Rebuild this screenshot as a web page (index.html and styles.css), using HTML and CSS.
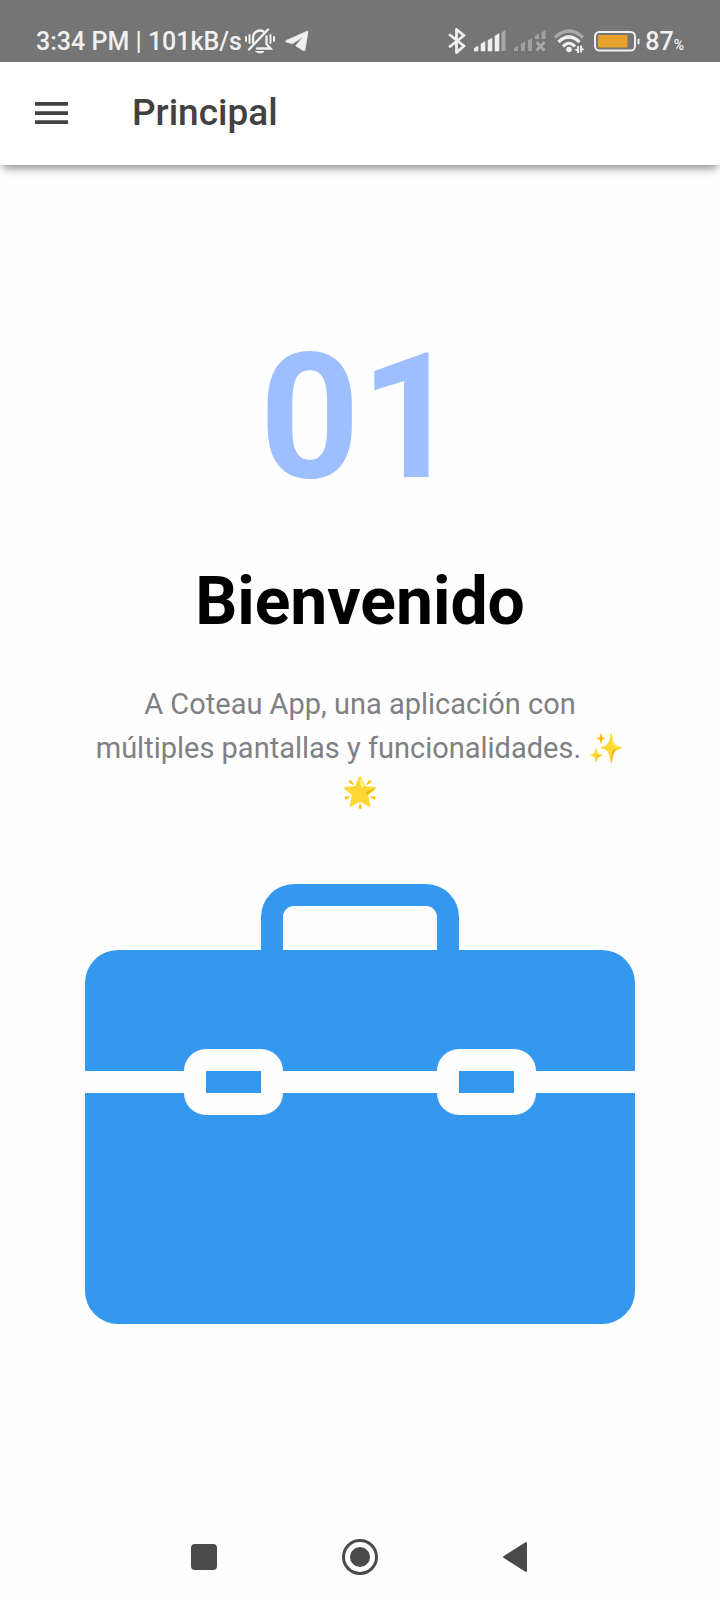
FILE: index.html
```html
<!DOCTYPE html>
<html lang="es">
<head>
<meta charset="utf-8">
<meta name="viewport" content="width=device-width, initial-scale=1">
<title>Principal</title>
<link rel="stylesheet" href="styles.css">
</head>
<body>
<div class="status">
  <div class="status-group">
    <span>3:34 PM | 101kB/s</span>
    <svg class="icon-bell" viewBox="0 0 30 26" fill="none" stroke="#f0f0f0" stroke-width="2" stroke-linecap="round" aria-hidden="true">
      <path d="M1 9v4M4.500 7v8M25.500 7v8M29 9v4"/>
      <path d="M8 15V9.500a7 7 0 0 1 10.500-6M21.500 8.500V16l4 4.500H12" stroke-width="2.400"/>
      <path d="M4 21.500L23 1.500" stroke-width="2.400"/>
      <path d="M11 23.500h8q-4 3-8 0z" fill="#f0f0f0" stroke-width="1"/>
    </svg>
    <svg class="icon-plane" viewBox="0 0 24 22" aria-hidden="true">
      <path d="M1 10.500L22 1.200q1.200-.4 1 1L20 20q-.5 1.500-1.800.6L10.500 15.800l8-9.300L7.500 13.700 1 12q-.8-.7 0-1.500z" fill="#f0f0f0" stroke="#f0f0f0" stroke-width=".6"/>
    </svg>
  </div>
  <div class="status-group">
    <svg class="icon-bluetooth" viewBox="0 0 18 26" fill="none" stroke="#f0f0f0" stroke-width="2.800" stroke-linejoin="round" stroke-linecap="round" aria-hidden="true">
      <path d="M2 7l14 11-7.500 6.500V1.500L16 7.500 2 18.500"/>
    </svg>
    <svg class="icon-signal" viewBox="0 0 32 22" fill="#f0f0f0" stroke="#f0f0f0" stroke-width=".6" aria-hidden="true">
      <path d="M0 21v-2.500l4-2.500v5zM7 21v-7l4-2.500V21zM14 21V10.500L18 8v13zM21 21V6l4-2.500V21z"/>
      <path d="M27.500 21V2.500L31.500 0v21z" fill="#a9a9a9" stroke="none"/>
    </svg>
    <svg class="icon-signal" viewBox="0 0 32 22" fill="#a0a0a0" aria-hidden="true">
      <path d="M0 21v-2.500l4-2.500v5zM7 21v-7l4-2.500V21zM14 21V10.500L18 8v13zM21 9V6l4-2.500V9zM27.500 9V2.500L31.500 0v9z"/>
      <path d="M22.500 12l8 8.500M30.500 12l-8 8.500" stroke="#a9a9a9" stroke-width="2.800"/>
    </svg>
    <svg class="icon-wifi" viewBox="0 0 30 25" fill="none" stroke="#f0f0f0" stroke-width="3.200" aria-hidden="true">
      <path d="M1 8.500Q15-4.500 29 8.500" stroke="#a9a9a9"/>
      <path d="M4.500 13Q15 3 25.500 13"/>
      <path d="M9 17.500Q15 11 21 17.500"/>
      <circle cx="15" cy="20.500" r="2.800" fill="#f0f0f0" stroke="none"/>
      <path d="M24 24v-7M27 16.500v7" stroke-width="1.800"/>
      <path d="M20.500 20h4v4zM26.500 17l4 4h-4z" fill="#f0f0f0" stroke="none"/>
    </svg>
    <svg class="icon-battery" viewBox="0 0 46 21" aria-hidden="true">
      <rect x="1" y="1" width="40" height="18.500" rx="4.500" fill="none" stroke="#f0f0f0" stroke-width="2"/>
      <rect x="4" y="4" width="29.500" height="12.500" rx="1" fill="#e8a22c"/>
      <rect x="43.500" y="7.500" width="2" height="6" rx="1" fill="#f0f0f0"/>
    </svg>
    <span class="battery-level">87<small>%</small></span>
  </div>
</div>
<header class="appbar">
  <button class="menu" type="button" aria-label="Menú">
    <svg viewBox="0 0 33 22" fill="#424242" aria-hidden="true"><path d="M0 0h33v3.700H0zM0 9.200h33v3.700H0zM0 18.300h33V22H0z"/></svg>
  </button>
  <h1 class="title">Principal</h1>
</header>
<main class="content">
  <p class="number">01</p>
  <h2 class="welcome">Bienvenido</h2>
  <p class="intro">A Coteau App, una aplicación con múltiples pantallas y funcionalidades. ✨ 🌟</p>
  <svg class="briefcase" viewBox="0 0 50 40" aria-hidden="true">
    <path fill="#3498ee" d="M0 17V9a3 3 0 0 1 3-3h13V3a3 3 0 0 1 3-3h12a3 3 0 0 1 3 3v3h13a3 3 0 0 1 3 3v8h-9a2 2 0 0 0-2-2h-5a2 2 0 0 0-2 2H18a2 2 0 0 0-2-2h-5a2 2 0 0 0-2 2zM18 6h14V3a1 1 0 0 0-1-1H19a1 1 0 0 0-1 1zM11 17h5v2h-5zM34 17h5v2h-5zM0 19h9a2 2 0 0 0 2 2h5a2 2 0 0 0 2-2h14a2 2 0 0 0 2 2h5a2 2 0 0 0 2-2h9v18a3 3 0 0 1-3 3H3a3 3 0 0 1-3-3z" fill-rule="evenodd"/>
  </svg>
</main>
<nav class="navbar">
  <button type="button" aria-label="Recientes">
    <svg viewBox="0 0 36 36" aria-hidden="true"><rect x="5" y="5" width="26" height="26" rx="4" fill="#4a4a4a"/></svg>
  </button>
  <button type="button" aria-label="Inicio">
    <svg viewBox="0 0 36 36" aria-hidden="true"><circle cx="18" cy="18" r="16.500" fill="none" stroke="#4a4a4a" stroke-width="3"/><circle cx="18" cy="18" r="10" fill="#4a4a4a"/></svg>
  </button>
  <button type="button" aria-label="Atrás">
    <svg viewBox="0 0 36 36" aria-hidden="true"><path d="M6 18L28 4v28z" fill="#4a4a4a" stroke="#4a4a4a" stroke-width="2" stroke-linejoin="round"/></svg>
  </button>
</nav>
</body>
</html>
```
FILE: styles.css
```css
* {
  box-sizing: border-box;
}

body {
  margin: 0;
  min-height: 100vh;
  display: flex;
  flex-direction: column;
  background: #fefefe;
  font-family: Roboto, "Liberation Sans", sans-serif;
}

h1,
h2,
p {
  margin: 0;
}

button {
  display: flex;
  padding: 0;
  border: 0;
  background: none;
}

svg {
  display: block;
  flex: none;
}

.status {
  display: flex;
  justify-content: space-between;
  height: 62px;
  padding: 20px 36px 0;
  background: #757575;
  color: #f0f0f0;
  font-size: 25px;
  font-weight: 500;
  line-height: 42px;
  white-space: nowrap;
}

.status-group {
  display: flex;
  align-items: center;
  height: 42px;
}

.status-group span {
  padding-top: 2px;
}

.icon-bell {
  width: 30px;
  height: 26px;
  margin-left: 3px;
}

.icon-plane {
  width: 24px;
  height: 22px;
  margin-left: 10px;
}

.icon-bluetooth {
  width: 18px;
  height: 26px;
}

.icon-signal {
  width: 32px;
  height: 22px;
  margin-left: 8px;
}

.icon-wifi {
  width: 30px;
  height: 25px;
  margin-left: 8px;
}

.icon-battery {
  width: 46px;
  height: 21px;
  margin-left: 10px;
}

.battery-level {
  display: flex;
  align-items: baseline;
  margin-left: 5px;
}

.battery-level small {
  font-size: 14px;
  line-height: 20px;
}

.appbar {
  display: flex;
  align-items: center;
  height: 103px;
  padding: 0 35px 2px;
  gap: 64px;
  background: #fff;
  box-shadow: 0 7px 8px -3px rgba(0, 0, 0, 0.4);
}

.menu svg {
  width: 33px;
  height: 22px;
}

.title {
  color: #424242;
  font-size: 37px;
  font-weight: 500;
  line-height: 48px;
}

.content {
  flex: 1;
  display: flex;
  flex-direction: column;
  align-items: center;
  padding: 153px 85px 0;
  text-align: center;
}

.number {
  color: #9dbfff;
  font-size: 175px;
  font-weight: 700;
  line-height: 200px;
}

.welcome {
  margin-top: 44px;
  color: #000;
  font-size: 66px;
  font-weight: 700;
  line-height: 80px;
}

.intro {
  margin-top: 40px;
  color: #7f8085;
  font-size: 29px;
  line-height: 44px;
}

.briefcase {
  width: 100%;
  max-width: 550px;
  margin-top: 70px;
}

.navbar {
  display: flex;
  justify-content: space-between;
  padding: 0 186px 25px;
}

.navbar svg {
  width: 36px;
  height: 36px;
}
```
